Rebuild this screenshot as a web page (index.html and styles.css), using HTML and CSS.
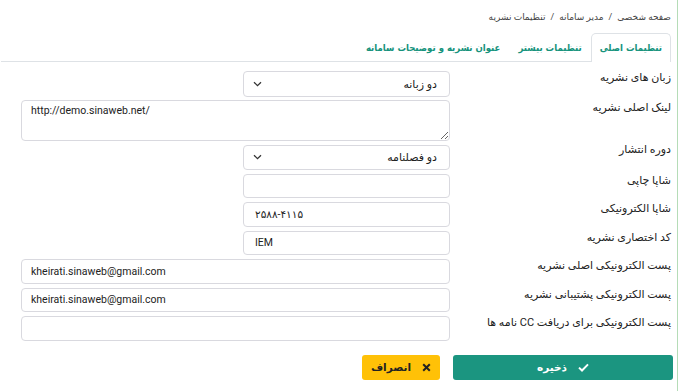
FILE: index.html
```html
<!DOCTYPE html>
<html lang="fa" dir="rtl">
<head>
  <meta charset="UTF-8" />
  <meta name="viewport" content="width=device-width, initial-scale=1.0"/>
  <title>تنظیمات نشریه</title>
  <link rel="stylesheet" href="styles.css">
</head>
<body>

<div class="page">
  <div class="breadcrumb">
    <span>صفحه شخصی</span><span class="sep">/</span><span>مدیر سامانه</span><span class="sep">/</span><span>تنظیمات نشریه</span>
  </div>

  <div class="tabs">
    <div class="tab active">تنظیمات اصلی</div>
    <div class="tab">تنظیمات بیشتر</div>
    <div class="tab">عنوان نشریه و توضیحات سامانه</div>
  </div>

  <form class="settings-form">
    <div class="form-row">
      <label for="lang">زبان های نشریه</label>
      <div class="field">
        <span class="select-wrap">
          <select id="lang" class="short tall">
            <option>دو زبانه</option>
          </select>
          <svg class="chevron" width="9" height="6" viewBox="0 0 9 6"><path d="M1 1.2 4.5 4.6 8 1.2" fill="none" stroke="#333" stroke-width="1.3"/></svg>
        </span>
      </div>
    </div>

    <div class="form-row">
      <label for="link">لینک اصلی نشریه</label>
      <div class="field">
        <textarea id="link" dir="ltr">http://demo.sinaweb.net/</textarea>
      </div>
    </div>

    <div class="form-row">
      <label for="period" class="up">دوره انتشار</label>
      <div class="field">
        <span class="select-wrap">
          <select id="period" class="short">
            <option>دو فصلنامه</option>
          </select>
          <svg class="chevron" width="9" height="6" viewBox="0 0 9 6"><path d="M1 1.2 4.5 4.6 8 1.2" fill="none" stroke="#333" stroke-width="1.3"/></svg>
        </span>
      </div>
    </div>

    <div class="form-row">
      <label for="issn-print">شاپا چاپی</label>
      <div class="field">
        <input type="text" id="issn-print" class="short" dir="ltr" value="" />
      </div>
    </div>

    <div class="form-row">
      <label for="issn-online">شاپا الکترونیکی</label>
      <div class="field">
        <input type="text" id="issn-online" class="short" dir="ltr" value="۲۵۸۸-۴۱۱۵" />
      </div>
    </div>

    <div class="form-row">
      <label for="abbr">کد اختصاری نشریه</label>
      <div class="field">
        <input type="text" id="abbr" class="short" dir="ltr" value="IEM" />
      </div>
    </div>

    <div class="form-row">
      <label for="email-main">پست الکترونیکی اصلی نشریه</label>
      <div class="field">
        <input type="email" id="email-main" dir="ltr" value="kheirati.sinaweb@gmail.com" />
      </div>
    </div>

    <div class="form-row">
      <label for="email-support">پست الکترونیکی پشتیبانی نشریه</label>
      <div class="field">
        <input type="email" id="email-support" dir="ltr" value="kheirati.sinaweb@gmail.com" />
      </div>
    </div>

    <div class="form-row">
      <label for="email-cc">پست الکترونیکی برای دریافت CC نامه ها</label>
      <div class="field">
        <input type="email" id="email-cc" dir="ltr" value="" />
      </div>
    </div>

    <div class="actions">
      <button type="submit" class="btn save">
        <svg width="11" height="9" viewBox="0 0 11 9"><path d="M1 4.6 4 7.5 10 1.4" fill="none" stroke="#fff" stroke-width="2"/></svg>
        ذخیره
      </button>
      <button type="button" class="btn cancel">
        <svg width="9" height="9" viewBox="0 0 9 9"><path d="M1.2 1.2 7.8 7.8M7.8 1.2 1.2 7.8" fill="none" stroke="#222" stroke-width="2"/></svg>
        انصراف
      </button>
    </div>
  </form>
</div>

</body>
</html>
```

FILE: styles.css
```css
body {
  font-family: Roboto, "DejaVu Sans", sans-serif;
  background-color: #fff;
  color: #222;
  margin: 0;
  padding: 0;
}

.page {
  width: 677px;
  height: 391px;
  box-sizing: border-box;
  padding: 0 6px 0 20px;
  border-right: 1px solid #b5dcb7;
}

.breadcrumb {
  font-size: 9px;
  color: #444;
  padding-top: 10px;
  height: 23px;
  line-height: 14px;
}

.breadcrumb .sep {
  margin: 0 5px;
}

.tabs {
  display: flex;
  height: 28px;
  border-bottom: 1px solid #dee2e6;
  margin-left: -20px;
}

.tab {
  font-family: "DejaVu Sans Condensed", "DejaVu Sans", sans-serif;
  font-size: 9.5px;
  font-weight: bold;
  color: #16937c;
  padding: 0 8px;
  line-height: 28px;
  border: 1px solid transparent;
  border-bottom: none;
  border-radius: 5px 5px 0 0;
}

.tab.active {
  border-color: #dee2e6;
  background: #fff;
  margin-bottom: -1px;
  height: 29px;
  box-sizing: border-box;
}

.settings-form {
  display: grid;
  grid-template-columns: 215px 429px;
  column-gap: 6px;
  row-gap: 4px;
  padding-top: 9px;
}

.form-row {
  display: contents;
}

label {
  font-size: 11px;
  color: #222;
  line-height: 14px;
  padding-top: 0;
}

label.up {
  margin-top: -2px;
}

.field {
  display: flex;
  justify-content: flex-start;
}

input, select, textarea {
  width: 100%;
  height: 24.5px;
  box-sizing: border-box;
  border: 1px solid #d9d9df;
  border-radius: 4px;
  font-family: Roboto, "DejaVu Sans", sans-serif;
  font-size: 10.5px;
  color: #222;
  padding: 0 9px;
  background: #fff;
  margin: 0;
}

select {
  appearance: none;
  -webkit-appearance: none;
  padding: 0 12px 0 24px;
  font-size: 11px;
}

.select-wrap {
  position: relative;
  display: block;
  width: 207px;
}

.chevron {
  position: absolute;
  left: 10px;
  top: 50%;
  margin-top: -3px;
  pointer-events: none;
}

.short {
  width: 207px;
}

input.short {
  padding: 0 11px;
}

.tall {
  height: 26px;
}

textarea {
  height: 41px;
  padding: 3px 9px;
  resize: vertical;
  margin-top: -1px;
}

.actions {
  grid-column: 1 / 3;
  display: flex;
  gap: 13px;
  margin-top: 10px;
  margin-right: -2px;
}

.btn {
  height: 25px;
  border: none;
  border-radius: 3px;
  font-family: Roboto, "DejaVu Sans", sans-serif;
  font-size: 10.5px;
  font-weight: bold;
  display: flex;
  align-items: center;
  justify-content: center;
  gap: 11px;
  cursor: pointer;
}

.save {
  width: 220px;
  background-color: #1b9580;
  color: #fff;
}

.cancel {
  width: 78px;
  background-color: #ffc107;
  color: #222;
}
```
